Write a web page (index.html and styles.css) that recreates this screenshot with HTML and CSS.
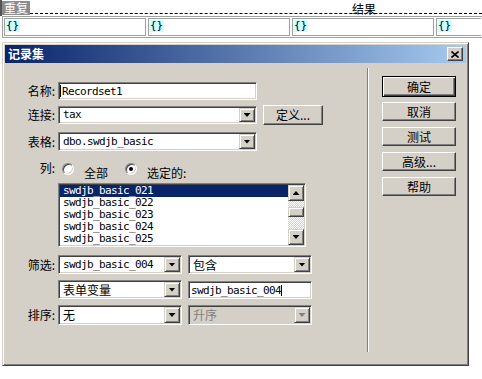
FILE: index.html
```html
<!DOCTYPE html>
<html>
<head>
<meta charset="utf-8">
<link rel="stylesheet" href="styles.css">
</head>
<body>
<div class="top">
  <div class="tab">重复</div>
  <div class="dash"><span class="result">结果</span></div>
</div>
<div class="grid">
  <div class="cell"><span class="tok">{}</span></div>
  <div class="cell"><span class="tok">{}</span></div>
  <div class="cell"><span class="tok">{}</span></div>
  <div class="cell"><span class="tok">{}</span></div>
</div>
<div class="dialog">
  <div class="title">
    <span class="ttext">记录集</span>
    <div class="close"><svg width="8" height="7" viewBox="0 0 8 7"><path d="M0.5 0.5L7.5 6.5M7.5 0.5L0.5 6.5" stroke="#000" stroke-width="1.6"/></svg></div>
  </div>
  <div class="body">
    <div class="form">
      <div class="f r-name">
        <span class="lbl">名称:</span>
        <div class="inp w199"><span class="caret"></span><span class="mono">Recordset1</span></div>
      </div>
      <div class="f r-conn">
        <span class="lbl">连接:</span>
        <div class="sel w199 h18"><span class="txt mono">tax</span><span class="dd"><i></i></span></div>
        <div class="pbtn">定义...</div>
      </div>
      <div class="f r-table">
        <span class="lbl">表格:</span>
        <div class="sel w199 h19"><span class="txt mono">dbo.swdjb_basic</span><span class="dd"><i></i></span></div>
      </div>
      <div class="f r-radio">
        <span class="lbl lbl-top">列:</span>
        <span class="radio"></span><span class="rtext">全部</span>
        <span class="radio checked"></span><span class="rtext">选定的:</span>
      </div>
      <div class="f r-list">
        <span class="lbl"></span>
        <div class="list">
          <div class="items">
            <div class="it on">swdjb_basic_021</div>
            <div class="it">swdjb_basic_022</div>
            <div class="it">swdjb_basic_023</div>
            <div class="it">swdjb_basic_024</div>
            <div class="it">swdjb_basic_025</div>
          </div>
          <div class="sb">
            <span class="sbb"><i class="upi"></i></span>
            <span class="track"><span class="thumb"></span></span>
            <span class="sbb"><i></i></span>
          </div>
        </div>
      </div>
      <div class="f r-f1">
        <span class="lbl">筛选:</span>
        <div class="sel w124 h19"><span class="txt mono">swdjb_basic_004</span><span class="dd"><i></i></span></div>
        <div class="sel w124 h19 ml6"><span class="txt">包含</span><span class="dd"><i></i></span></div>
      </div>
      <div class="f r-f2">
        <span class="lbl"></span>
        <div class="sel w124 h19"><span class="txt">表单变量</span><span class="dd"><i></i></span></div>
        <div class="inp w124 h15 ml6 small"><span class="mono">swdjb_basic_004</span><span class="caret"></span></div>
      </div>
      <div class="f r-sort">
        <span class="lbl">排序:</span>
        <div class="sel w124 h20"><span class="txt">无</span><span class="dd"><i></i></span></div>
        <div class="sel w124 h20 ml6 dis"><span class="txt">升序</span><span class="dd"><i></i></span></div>
      </div>
    </div>
    <div class="sep"></div>
    <div class="btns">
      <div class="btn def">确定</div>
      <div class="btn">取消</div>
      <div class="btn">测试</div>
      <div class="btn">高级...</div>
      <div class="btn">帮助</div>
    </div>
  </div>
</div>
</body>
</html>
```

FILE: styles.css
```css
* { box-sizing: border-box; }
html, body { margin: 0; }
body {
  background: #fff;
  font-family: "Noto Sans CJK SC", "Noto Sans", sans-serif;
  font-size: 12px;
  color: #000;
  width: 482px;
  height: 379px;
  overflow: hidden;
}
.mono {
  font-family: "DejaVu Sans Mono", "Liberation Mono", monospace;
  font-size: 11px; letter-spacing: -0.62px;
}

/* top strip */
.top { display: flex; height: 16px; border-left: 2px solid #555; }
.tab {
  width: 28px; height: 14px; margin-top: 1px;
  background: #8c8c8c; color: #fff;
  font-size: 12px; line-height: 14px; text-align: center;
}
.dash { flex: 1; height: 14px; border-bottom: 1px dashed #000; }
.result { display: block; width: 30px; margin-left: 322px; font-size: 12px; line-height: 17px; margin-top: -1px; padding-top: 1px; }

.grid {
  display: flex; gap: 2px;
  margin-left: 2px; height: 22px; padding: 1px;
  border: 1px solid #a0a0a0; border-right: 0;
  overflow: hidden;
}
.cell { flex: 0 0 142px; border: 1px solid #a0a0a0; padding: 1px; }
.cell:last-child { flex: 1 1 auto; border-right: 0; }
.tok {
  display: block; width: 13px; height: 12px;
  background: #ccffff; color: #002;
  font-family: "DejaVu Sans Mono", monospace; font-size: 11px;
  line-height: 12px; text-align: center;
}

/* dialog */
.dialog {
  margin: 4px 0 0 2px;
  width: 467px; height: 324px;
  background: #d4d0c8;
  border: 1px solid; border-color: #d4d0c8 #404040 #404040 #d4d0c8;
  box-shadow: inset 1px 1px #fff, inset -1px -1px #808080;
  padding: 2px;
  display: flex; flex-direction: column;
}
.title {
  height: 18px; flex: none;
  background: linear-gradient(to right, #0a246a, #a6caf0);
  display: flex; align-items: center; justify-content: space-between;
  padding: 0 3px 0 3px;
}
.ttext { color: #fff; font-weight: bold; font-size: 12px; line-height: 14px; }
.close {
  width: 16px; height: 14px;
  background: #d4d0c8;
  border: 1px solid; border-color: #fff #404040 #404040 #fff;
  box-shadow: inset -1px -1px #808080;
  display: flex; align-items: center; justify-content: center;
}
.body { flex: 1; display: flex; }
.form { width: 355px; flex: none; display: flex; flex-direction: column; }
.sep {
  margin: 5px 0 0 7px; width: 2px; height: 284px;
  border-left: 1px solid #808080; border-right: 1px solid #fff;
}
.btns { margin: 13px 0 0 13px; display: flex; flex-direction: column; gap: 6px; }

/* raised button */
.btn, .pbtn {
  width: 74px; height: 19px;
  background: #d4d0c8;
  border: 1px solid; border-color: #fff #404040 #404040 #fff;
  box-shadow: inset -1px -1px #808080;
  display: flex; align-items: center; justify-content: center;
  font-size: 12px; line-height: 12px;
}
.btn.def {
  height: 21px; margin-bottom: -1px;
  border: 1px solid #000;
  box-shadow: inset 1px 1px #fff, inset -1px -1px #404040, inset -2px -2px #808080;
}
.pbtn { width: 60px; height: 20px; margin-left: 6px; }

/* form rows */
.f { display: flex; align-items: center; flex: none; }
.lbl { width: 50px; margin-right: 3px; text-align: right; flex: none; font-size: 12px; line-height: 14px; }
.r-name { margin-top: 19px; height: 18px; }
.r-conn { margin-top: 5px; height: 20px; }
.r-table { margin-top: 7px; height: 19px; }
.r-radio { margin-top: 9px; height: 20px; align-items: flex-start; }
.r-list { margin-top: 3px; height: 64px; align-items: flex-start; }
.r-f1 { margin-top: 8px; height: 19px; }
.r-f2 { margin-top: 6px; height: 19px; align-items: flex-end; }
.r-sort { margin-top: 6px; height: 20px; }
.lbl-top { margin-top: 1px; }

.w199 { width: 199px; }
.w124 { width: 124px; }
.h15 { height: 15px; }
.h18 { height: 18px; }
.h19 { height: 19px; }
.h20 { height: 20px; }
.ml6 { margin-left: 6px; }

.inp, .sel, .list {
  background: #fff;
  border: 1px solid; border-color: #808080 #fff #fff #808080;
  box-shadow: inset 1px 1px #404040, inset -1px -1px #d4d0c8;
  padding: 1px;
  display: flex; align-items: center;
}
.inp { height: 18px; }
.caret { width: 1px; height: 12px; background: #000; margin: 0 1px 0 0; flex: none; }
.small .mono { margin-left: 1px; }
.small .caret { height: 11px; margin-left: 0; }
.sel { align-items: stretch; }
.txt { flex: 1; padding-left: 3px; display: flex; align-items: center; line-height: 12px; overflow: hidden; white-space: nowrap; }
.dd, .sbb {
  width: 16px; flex: none;
  background: #d4d0c8;
  border: 1px solid; border-color: #d4d0c8 #404040 #404040 #d4d0c8;
  box-shadow: inset 1px 1px #fff, inset -1px -1px #808080;
  display: flex; align-items: center; justify-content: center;
}
.dd i, .sbb i {
  display: block; width: 7px; height: 4px; background: #000;
  clip-path: polygon(0 0, 100% 0, 50% 100%);
}
.sbb i.upi { clip-path: polygon(50% 0, 100% 100%, 0 100%); }
.dis { background: #d4d0c8; color: #808080; }
.dis .dd i { background: #808080; }

/* radios */
.radio {
  width: 12px; height: 12px; border-radius: 50%; flex: none;
  background: #fff;
  border: 1px solid; border-color: #808080 #fff #fff #808080;
  box-shadow: inset 1px 1px #404040, inset -1px -1px #d4d0c8;
  margin: 3px 0 0 4px;
  display: flex; align-items: center; justify-content: center;
}
.radio.checked::after { content: ""; width: 4px; height: 4px; border-radius: 50%; background: #000; }
.rtext { margin: 6px 0 0 10px; line-height: 14px; }
.rtext:nth-of-type(3) { margin-right: 13px; }

/* list */
.list { width: 248px; height: 64px; align-items: stretch; }
.items { flex: 1; }
.it {
  height: 12px; line-height: 12px; padding-left: 3px;
  font-family: "DejaVu Sans Mono", "Liberation Mono", monospace;
  font-size: 11px; letter-spacing: -0.62px;
}
.it.on { background: #0a246a; color: #fff; }
.sb { width: 16px; display: flex; flex-direction: column; }
.sbb { height: 16px; }
.track {
  flex: 1;
  background: repeating-conic-gradient(#fff 0 25%, #d4d0c8 0 50%) 0 0 / 2px 2px;
  display: flex; flex-direction: column;
}
.thumb {
  margin-top: 6px; height: 10px;
  background: #d4d0c8;
  border: 1px solid; border-color: #d4d0c8 #404040 #404040 #d4d0c8;
  box-shadow: inset 1px 1px #fff, inset -1px -1px #808080;
}
```
